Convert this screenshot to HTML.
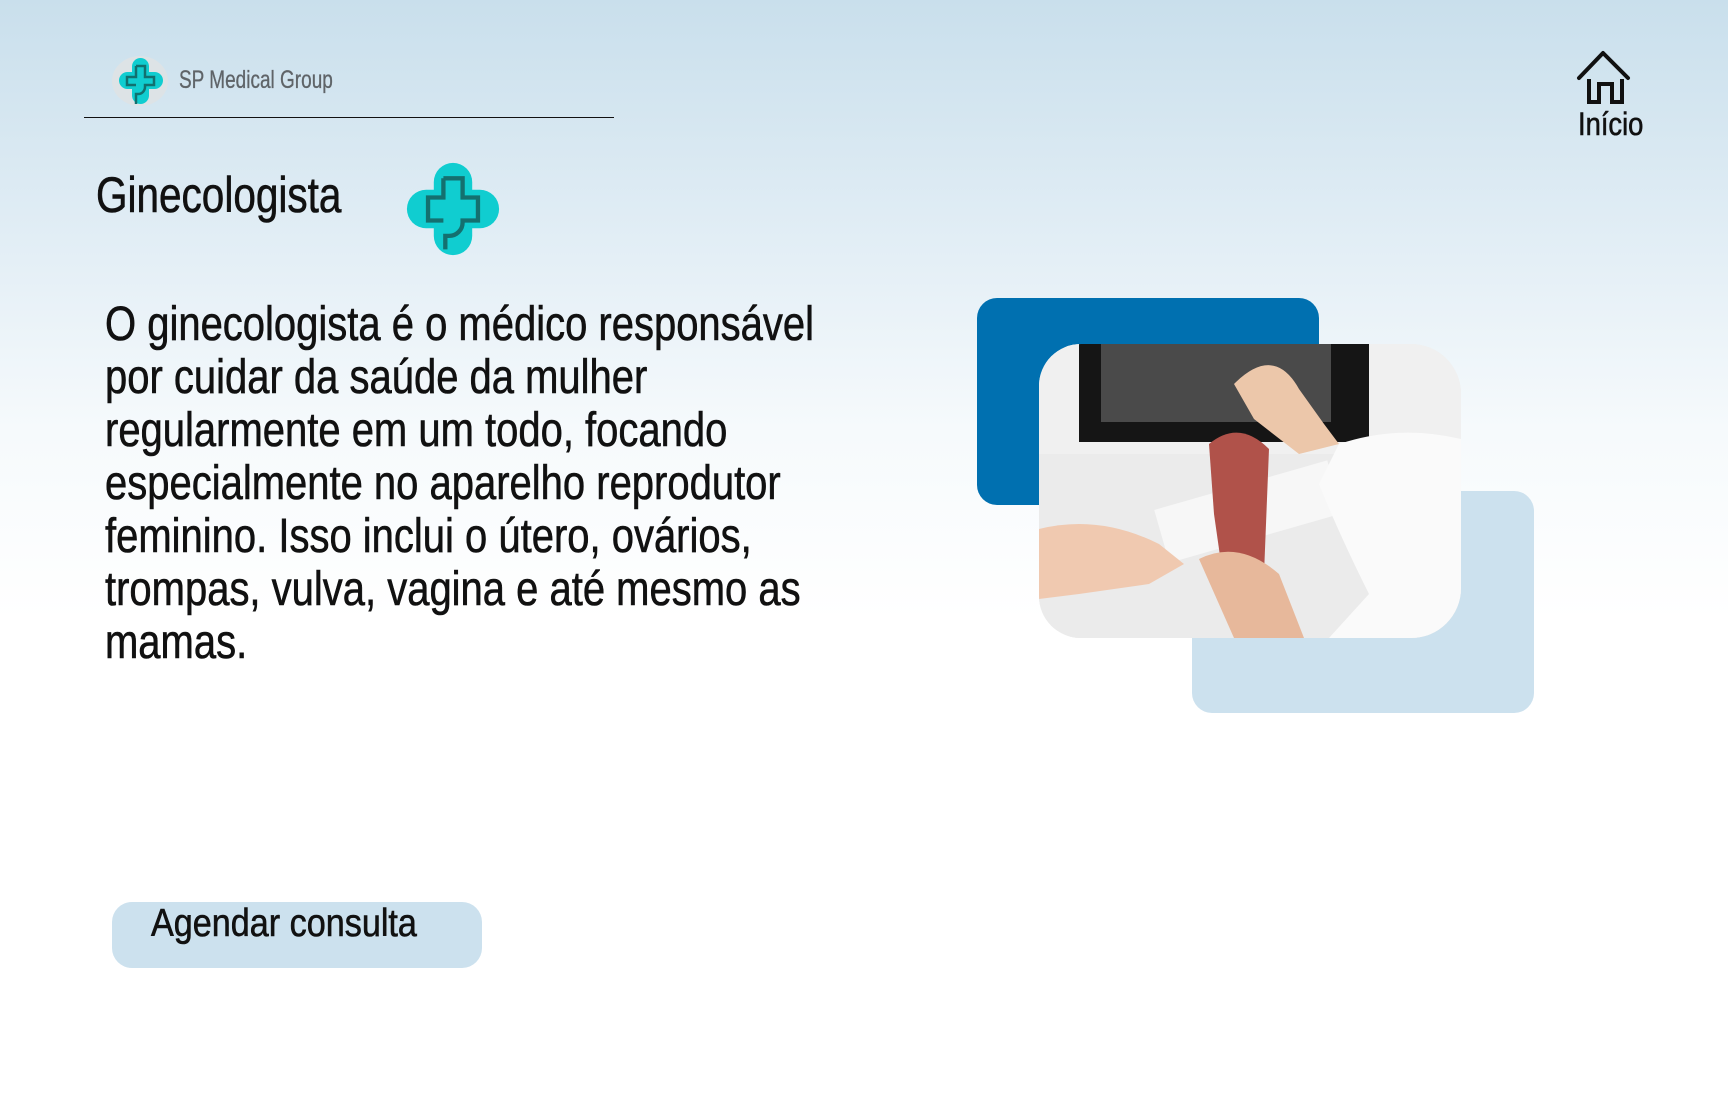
<!DOCTYPE html>
<html><head><meta charset="utf-8"><style>
*{margin:0;padding:0;box-sizing:border-box}
body{width:1728px;height:1117px;overflow:hidden;position:relative;font-family:"Liberation Sans",sans-serif;background:linear-gradient(180deg,#c9dfec 0px,#e4eff6 260px,#f6fafc 430px,#ffffff 620px,#ffffff 1117px)}
.abs{position:absolute}
.t{white-space:nowrap;transform-origin:0 0;-webkit-text-stroke:0.6px #111}
</style></head><body>
<!-- logo -->
<div class="abs" style="left:112px;top:56px;width:56px;height:50px;border-radius:50%;background:#dde3e6"></div>
<svg class="abs" style="left:115px;top:56px" width="52" height="50" viewBox="0 0 100 100">
<rect x="32" y="4" width="34" height="92" rx="17" fill="#10cdd0"/><rect x="6" y="32" width="88" height="34" rx="17" fill="#10cdd0"/>
<path d="M40 20h18v22h18v16H58v4a14 14 0 0 1-14 14h-4v20" fill="none" stroke="#12706f" stroke-width="5"/>
<path d="M40 20v22H22v16h18" fill="none" stroke="#12706f" stroke-width="5"/>
</svg>
<div class="abs t" style="left:179px;top:66px;font-size:25px;color:#5f6468;-webkit-text-stroke:0.3px #5f6468;transform:scaleX(0.76)">SP Medical Group</div>
<div class="abs" style="left:84px;top:117px;width:530px;height:1px;background:#111"></div>
<!-- title -->
<div class="abs t" style="left:96px;top:166px;font-size:50px;color:#111;transform:scaleX(0.81)">Ginecologista</div>
<svg class="abs" style="left:405px;top:161px" width="96" height="96" viewBox="0 0 100 100">
<rect x="30" y="2" width="40" height="96" rx="20" fill="#10cdd0"/><rect x="2" y="30" width="96" height="40" rx="20" fill="#10cdd0"/>
<path d="M40 18h20v20h16v24H60v2a14 14 0 0 1-14 14h-4v14" fill="none" stroke="#14706f" stroke-width="4.5"/>
<path d="M40 18v20H24v24h16" fill="none" stroke="#14706f" stroke-width="4.5"/>
</svg>
<!-- home -->
<svg class="abs" style="left:1574px;top:48px" width="60" height="60" viewBox="1574 48 60 60">
<path d="M1579 78L1603 53L1628 78" fill="none" stroke="#111" stroke-width="4" stroke-linejoin="round" stroke-linecap="round"/>
<path d="M1589 79V102H1599V84H1612V102H1622V79" fill="none" stroke="#111" stroke-width="4"/>
</svg>
<div class="abs t" style="left:1578px;top:106px;font-size:32px;color:#111;transform:scaleX(0.855)">Início</div>
<!-- paragraph -->
<div class="abs t" style="left:105px;top:298px;font-size:48px;line-height:53px;color:#111;transform:scaleX(0.833)">O ginecologista é o médico responsável<br>por cuidar da saúde da mulher<br>regularmente em um todo, focando<br>especialmente no aparelho reprodutor<br>feminino. Isso inclui o útero, ovários,<br>trompas, vulva, vagina e até mesmo as<br>mamas.</div>
<!-- images -->
<div class="abs" style="left:977px;top:298px;width:342px;height:207px;background:#0070b0;border-radius:20px"></div>
<div class="abs" style="left:1192px;top:491px;width:342px;height:222px;background:#cce1ee;border-radius:20px"></div>
<div class="abs" style="left:1039px;top:344px;width:422px;height:294px;border-radius:42px 50px 50px 42px;overflow:hidden;background:#ececec">
<svg width="422" height="294" viewBox="0 0 422 294">
<rect width="422" height="294" fill="#f0f0f0"/>
<rect x="40" y="0" width="290" height="98" fill="#151515"/>
<rect x="62" y="0" width="230" height="78" fill="#4a4a4a"/>
<rect x="0" y="110" width="422" height="184" fill="#ebebeb"/>
<rect x="120" y="140" width="180" height="55" fill="#f7f7f7" transform="rotate(-16 210 170)"/>
<path d="M0 185 Q60 170 120 200 L145 220 L110 240 L40 250 L0 255Z" fill="#f0c9b0"/>
<path d="M170 100 Q200 75 230 105 L225 230 L185 240 L175 170Z" fill="#b0524a"/>
<path d="M195 40 Q235 0 260 45 L285 80 L300 100 L260 110 L215 75 Z" fill="#ecc7aa"/>
<path d="M160 215 Q200 195 240 230 L265 294 L195 294Z" fill="#e7b89b"/>
<path d="M300 100 Q360 80 422 95 L422 294 L290 294 L330 250 Q300 190 280 140Z" fill="#fafafa"/>
</svg></div>
<!-- button -->
<div class="abs" style="left:112px;top:902px;width:370px;height:66px;background:#cce1ee;border-radius:20px"></div>
<div class="abs t" style="left:151px;top:902px;font-size:39px;color:#111;transform:scaleX(0.876)">Agendar consulta</div>
</body></html>
